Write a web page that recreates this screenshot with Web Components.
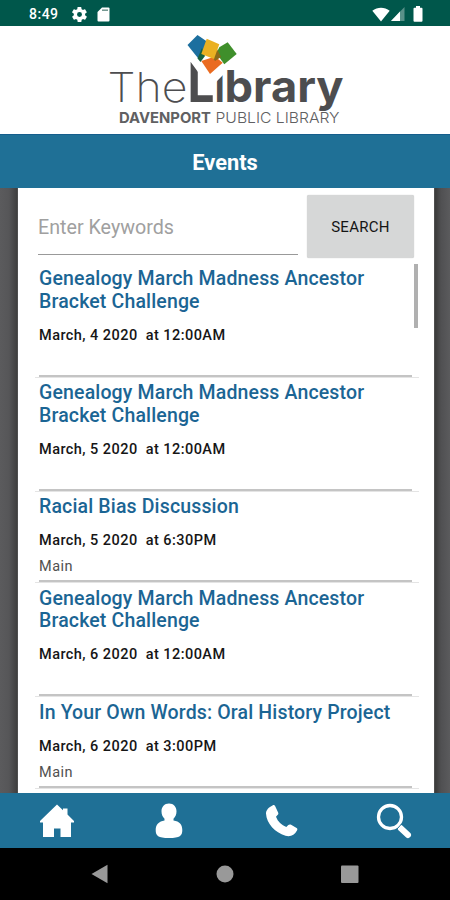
<!DOCTYPE html>
<html lang="en">
<head>
<meta charset="utf-8">
<title>Events</title>
<style>
    html, body { margin: 0; height: 100%; }
    body { font-family: Roboto, "Liberation Sans", sans-serif; overflow: hidden; background: #fff; }
</style>
</head>
<body>
<library-app></library-app>

<script>
class StatusBar extends HTMLElement {
    constructor() {
        super();
        this.attachShadow({ mode: 'open' });
        this.shadowRoot.innerHTML = `
            <style>
                :host { display: flex; align-items: center; height: 26px; box-sizing: border-box; padding: 2px 27px 0 29px; background: #00574b; color: #fff; }
                span { font-size: 14px; font-weight: 500; letter-spacing: .5px; width: 43px; }
                svg { display: block; fill: #fff; }
                .sd { margin-left: 10px; }
                .wifi { margin-left: auto; }
                .cell { margin-left: 1px; }
                .battery { margin-left: 8px; }
            </style>
            <span>8:49</span>
            <svg width="15" height="15" viewBox="2 2 20 20"><path d="M19.4 13a7.5 7.5 0 0 0 0-2l2.1-1.6c.2-.2.3-.4.1-.7l-2-3.4c-.1-.2-.4-.3-.6-.2l-2.5 1a7 7 0 0 0-1.7-1l-.4-2.6c0-.3-.2-.5-.5-.5h-4c-.2 0-.5.2-.5.4L9 5.100a7 7 0 0 0-1.700 1l-2.500-1c-.2-.1-.5 0-.6.2l-2 3.400c-.1.2-.1.5.1.7L4.500 11a7.500 7.500 0 0 0 0 2l-2.100 1.600c-.2.2-.2.5-.1.7l2 3.400c.1.2.4.3.6.2l2.500-1a7 7 0 0 0 1.700 1l.4 2.600c0 .3.3.5.5.5h4c.3 0 .5-.2.5-.5l.4-2.600a7 7 0 0 0 1.700-1l2.500 1c.2.1.5 0 .6-.2l2-3.400c.1-.2.1-.5-.1-.7zM12 15.300a3.300 3.300 0 1 1 0-6.600 3.300 3.300 0 0 1 0 6.600z"/></svg>
            <svg class="sd" width="13" height="15" viewBox="0 0 13 15"><path d="M5 .5h6.500a1 1 0 0 1 1 1v12a1 1 0 0 1-1 1h-10a1 1 0 0 1-1-1V5z"/><path d="M5 3.200h6" stroke="#70958e" stroke-width="1.500"/></svg>
            <svg class="wifi" width="18" height="15" viewBox="0 0 18 15"><path d="M9 14.500.300 3.700C5.500-.2 12.500-.2 17.700 3.700z"/></svg>
            <svg class="cell" width="14" height="14" viewBox="0 0 14 14"><path d="M13.500 0v14H0z" opacity=".35"/><path d="M9 4.600V14H0z"/></svg>
            <svg class="battery" width="10" height="16" viewBox="0 0 10 16"><path d="M3 0h4v1.800h1.500a1 1 0 0 1 1 1v12a1 1 0 0 1-1 1h-7a1 1 0 0 1-1-1v-12a1 1 0 0 1 1-1H3z"/></svg>
        `;
    }
}

class LibraryLogo extends HTMLElement {
    constructor() {
        super();
        this.attachShadow({ mode: 'open' });
        this.shadowRoot.innerHTML = `
            <style>
                :host { display: block; height: 108px; background: #fff; }
                svg { display: block; font-family: Inter, Roboto, sans-serif; fill: #4d4d4f; }
            </style>
            <svg width="450" height="108" viewBox="0 26 450 108">
                <defs>
                    <!-- slanted stem tops, and no dot on the i -->
                    <clipPath id="cut"><path d="M100 60h86l4 1 8 11v18h17v-7l9-9v-10l10 6h120v50H100z"/></clipPath>
                </defs>
                <path d="M197.500 35l10.200 7-8.200 18-12-15z" fill="#1c6f9f"/>
                <path d="M202 48l3 8-4.500 6-3-3.500z" fill="#15603f"/>
                <path d="M227.700 42.300l9 11.700-12.400 10.300-8-11 3-6z" fill="#3f8f2b"/>
                <path d="M201.300 61l13.700-4.500 7.700 6.200-12.700 11.300z" fill="#ea6b20"/>
                <path d="M217 49l4 8-6 4-2-3z" fill="#8a6a1a"/>
                <path d="M206.700 38.800l12.600 5.400-5.300 14.800-12.700-5z" fill="#eab022"/>
                <text y="102" clip-path="url(#cut)"><tspan x="107.500" font-size="41" font-weight="250" textLength="80" lengthAdjust="spacingAndGlyphs">The</tspan><tspan x="187.500" font-size="55" font-weight="700" textLength="27" lengthAdjust="spacingAndGlyphs">L</tspan><tspan x="215.300" font-size="50" font-weight="800" textLength="9" lengthAdjust="spacingAndGlyphs">i</tspan><tspan x="224.600" font-size="44" font-weight="700" textLength="119" lengthAdjust="spacingAndGlyphs">brary</tspan></text>
                <text x="119" y="123" font-size="14.500" font-weight="700" fill="#606062" textLength="92" lengthAdjust="spacingAndGlyphs">DAVENPORT</text>
                <text x="215.500" y="123" font-size="14.500" font-weight="300" fill="#606062" textLength="124" lengthAdjust="spacingAndGlyphs">PUBLIC LIBRARY</text>
            </svg>
        `;
    }
}

class PageTitle extends HTMLElement {
    constructor() {
        super();
        this.attachShadow({ mode: 'open' });
        this.shadowRoot.innerHTML = `
            <style>
                :host { display: flex; align-items: center; justify-content: center; height: 54px; box-sizing: border-box; padding-top: 1px; background: #1f7096; border-top: 1px solid #155e8c; color: #fff; font-size: 21.800px; font-weight: 700; }
            </style>
            <slot></slot>
        `;
    }
}

class SearchForm extends HTMLElement {
    constructor() {
        super();
        this.attachShadow({ mode: 'open' });
        this.shadowRoot.innerHTML = `
            <style>
                :host { display: flex; gap: 9px; padding: 7px 20px 0; }
                .field { flex: 1; height: 60px; box-sizing: border-box; border-bottom: 1.500px solid #999; font-size: 19.700px; line-height: 65px; color: #a0a0a0; }
                .button { width: 107px; height: 63px; display: grid; place-items: center; background: #d6d7d7; border-radius: 2px; box-shadow: 0 0 1px #bbb; font-size: 15px; font-weight: 400; letter-spacing: .3px; color: #151515; }
            </style>
            <div class="field" role="textbox">Enter Keywords</div>
            <div class="button" role="button">SEARCH</div>
        `;
    }
}

class EventItem extends HTMLElement {
    constructor() {
        super();
        this.attachShadow({ mode: 'open' });
        this.shadowRoot.innerHTML = `
            <style>
                :host {
                    display: block; padding: 4.500px 4px 6.700px;
                    background:
                        linear-gradient(#c4c4c4, #c4c4c4) 4px calc(100% - 1px) / 373px 2px no-repeat,
                        linear-gradient(#e4e4e4, #e4e4e4) 0 100% / 384px 1px no-repeat;
                }
                .title { font-size: 19.500px; line-height: 22.700px; font-weight: 500; letter-spacing: .15px; color: #1b6594; }
                .date { margin-top: 13.500px; font-size: 14.500px; line-height: 18px; font-weight: 500; letter-spacing: .45px; color: #161616; white-space: pre; }
                .place { margin-top: 8px; height: 18px; font-size: 14.500px; line-height: 18px; letter-spacing: .5px; color: #505050; }
            </style>
            <div class="title"><slot></slot></div>
            <div class="date"></div>
            <div class="place"></div>
        `;
    }

    connectedCallback() {
        this.shadowRoot.querySelector('.date').textContent = this.getAttribute('date') + '  at ' + this.getAttribute('time');
        this.shadowRoot.querySelector('.place').textContent = this.getAttribute('place') || '';
    }
}

class EventList extends HTMLElement {
    constructor() {
        super();
        this.attachShadow({ mode: 'open' });
        this.shadowRoot.innerHTML = `
            <style>
                :host { display: block; position: relative; margin: 5.500px 14px 0 17px; }
                .thumb { position: absolute; right: 2px; top: 0; width: 4px; height: 64px; background: #b0b0b0; }
            </style>
            <slot></slot>
            <div class="thumb"></div>
        `;
    }
}

class TabBar extends HTMLElement {
    constructor() {
        super();
        this.attachShadow({ mode: 'open' });
        this.shadowRoot.innerHTML = `
            <style>
                :host { display: grid; grid-template-columns: repeat(4, 1fr); place-items: center; height: 55px; box-sizing: border-box; padding-left: 1px; background: #1f7096; }
                svg { display: block; width: 36px; height: 36px; fill: #fff; }
            </style>
            <svg viewBox="0 0 36 36"><path d="M18 1.500l6 5.800V5.500h4.500v6L35 18v1.500h-3V34H21.500v-8.500h-6.500V34H4v-14.500H1V18z"/></svg>
            <svg viewBox="0 0 36 36"><path d="M18 .5c4.600 0 7.500 3.300 7.500 8 0 3-1.300 5.600-3 7.300v1.700c6 .8 8.800 4 8.800 9.500 0 5.800-2.300 8-13.300 8s-13.300-2.200-13.300-8c0-5.500 3.300-8.700 8.800-9.500v-1.700c-1.700-1.700-3-4.300-3-7.300 0-4.700 2.900-8 7.500-8z"/></svg>
            <svg viewBox="0 0 36 36"><path d="M8.500 2.500c1-.7 2-.5 2.600.5l3 6.500c.5 1 .3 2-.6 2.600l-1.500 1.700c1.800 4.800 5.500 8.500 10.300 10.300l2-2c.8-.8 1.800-.9 2.800-.3l5.500 3.300c.9.600 1 1.500.4 2.400-2.500 4.500-6.500 6.800-11.500 5.300C11 29.500 2.500 20.500 2 10.500 1.900 7 5 4.200 8.500 2.500z"/></svg>
            <svg viewBox="0 0 36 36"><circle cx="14" cy="14" r="11.500" fill="none" stroke="#fff" stroke-width="3.300"/><path d="M24.500 25l7.500 7" stroke="#fff" stroke-width="6" stroke-linecap="round"/><path d="M21 26l5-5.500" stroke="#1f7096" stroke-width="1"/></svg>
        `;
    }
}

class SystemNav extends HTMLElement {
    constructor() {
        super();
        this.attachShadow({ mode: 'open' });
        this.shadowRoot.innerHTML = `
            <style>
                :host { display: flex; justify-content: center; height: 52px; background: #000; }
                svg { display: block; fill: #999; }
            </style>
            <svg width="270" height="52" viewBox="90 848 270 52">
                <path d="M91.500 874l16-9.300v18.600z"/>
                <circle cx="225" cy="874" r="8.500"/>
                <rect x="341" y="865.500" width="17.500" height="17.500" rx="1"/>
            </svg>
        `;
    }
}

class LibraryApp extends HTMLElement {
    constructor() {
        super();
        this.attachShadow({ mode: 'open' });
        this.shadowRoot.innerHTML = `
            <style>
                :host { display: flex; flex-direction: column; width: 450px; height: 900px; }
                main { flex: 1; min-height: 0; padding: 0 16px 0 18px; background: linear-gradient(90deg, #5b5b5d 0, #565658 9px, #3c3c3c 18px, #3c3c3c 436px, #505052 441px, #5b5b5d 450px); overflow: hidden; }
                .sheet { height: 100%; background: #fff; overflow: hidden; box-shadow: 0 0 1px #aaa; }
            </style>
            <status-bar></status-bar>
            <library-logo></library-logo>
            <page-title>Events</page-title>
            <main>
                <div class="sheet">
                    <search-form></search-form>
                    <event-list>
                        <event-item date="March, 4 2020" time="12:00AM">Genealogy March Madness Ancestor Bracket Challenge</event-item>
                        <event-item date="March, 5 2020" time="12:00AM">Genealogy March Madness Ancestor Bracket Challenge</event-item>
                        <event-item date="March, 5 2020" time="6:30PM" place="Main">Racial Bias Discussion</event-item>
                        <event-item date="March, 6 2020" time="12:00AM">Genealogy March Madness Ancestor Bracket Challenge</event-item>
                        <event-item date="March, 6 2020" time="3:00PM" place="Main">In Your Own Words: Oral History Project</event-item>
                    </event-list>
                </div>
            </main>
            <tab-bar></tab-bar>
            <system-nav></system-nav>
        `;
    }
}

customElements.define('status-bar', StatusBar);
customElements.define('library-logo', LibraryLogo);
customElements.define('page-title', PageTitle);
customElements.define('search-form', SearchForm);
customElements.define('event-item', EventItem);
customElements.define('event-list', EventList);
customElements.define('tab-bar', TabBar);
customElements.define('system-nav', SystemNav);
customElements.define('library-app', LibraryApp);
</script>
</body>
</html>
